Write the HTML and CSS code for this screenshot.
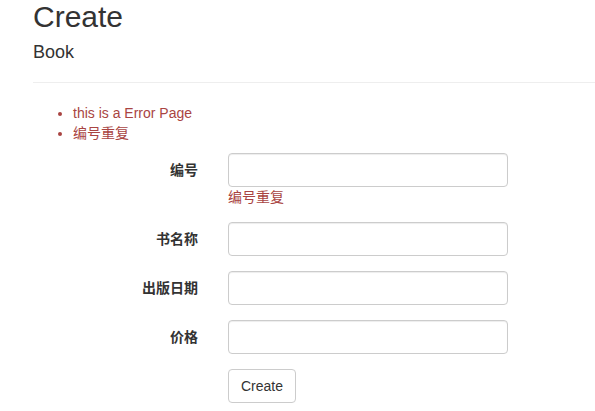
FILE: index.html
```html
<!DOCTYPE html>
<html lang="zh">
<head>
<meta charset="utf-8">
<title>Create</title>
<link rel="stylesheet" href="styles.css">
</head>
<body>
<div class="container">
  <h2 class="title">Create</h2>
  <form class="form-horizontal">
    <h4 class="subtitle">Book</h4>
    <hr class="divider">
    <div class="validation-summary">
      <ul class="error-list">
        <li>this is a Error Page</li>
        <li>编号重复</li>
      </ul>
    </div>
    <div class="form-group">
      <label class="control-label">编号</label>
      <div class="field">
        <input class="form-control" type="text">
        <span class="field-error">编号重复</span>
      </div>
    </div>
    <div class="form-group">
      <label class="control-label">书名称</label>
      <div class="field"><input class="form-control" type="text"></div>
    </div>
    <div class="form-group">
      <label class="control-label">出版日期</label>
      <div class="field"><input class="form-control" type="text"></div>
    </div>
    <div class="form-group">
      <label class="control-label">价格</label>
      <div class="field"><input class="form-control" type="text"></div>
    </div>
    <div class="form-group">
      <span class="control-label"></span>
      <div class="field"><button type="button" class="btn">Create</button></div>
    </div>
  </form>
</div>
</body>
</html>
```

FILE: styles.css
```css
* { box-sizing: border-box; }
html, body { margin: 0; padding: 0; background: #fff; }
body {
  font-family: "Liberation Sans", Arial, "Noto Sans CJK SC", sans-serif;
  font-size: 14px;
  line-height: 20px;
  color: #333;
  overflow: hidden;
}
.container { padding: 0 0 0 33px; }
.title {
  font-size: 30px;
  font-weight: 500;
  line-height: 1.1;
  margin: 0 0 10px;
}
.subtitle {
  font-size: 18px;
  font-weight: 500;
  line-height: 1.1;
  margin: 10px 0 10px;
}
.divider {
  margin: 19px 0 20px;
  border: 0;
  border-top: 1px solid #eee;
}
.error-list {
  margin: 0 0 10px;
  padding-left: 40px;
  color: #a94442;
}
.form-group {
  display: grid;
  grid-template-columns: 165px 280px;
  column-gap: 30px;
  margin-bottom: 15px;
}
.control-label {
  font-weight: 700;
  text-align: right;
  padding-top: 6px;
  font-family: "Noto Sans CJK SC", "Liberation Sans", sans-serif;
}
.field { display: flex; flex-direction: column; align-items: flex-start; }
.form-control {
  display: block;
  width: 280px;
  height: 34px;
  padding: 6px 12px;
  font: inherit;
  color: #555;
  background: #fff;
  border: 1px solid #ccc;
  border-radius: 4px;
  box-shadow: inset 0 1px 1px rgba(0,0,0,.075);
  margin: 0;
}
.field-error { color: #a94442; }
.btn {
  height: 34px;
  padding: 6px 12px;
  font: inherit;
  color: #333;
  background: #fff;
  border: 1px solid #ccc;
  border-radius: 4px;
  margin: 0;
}
```
